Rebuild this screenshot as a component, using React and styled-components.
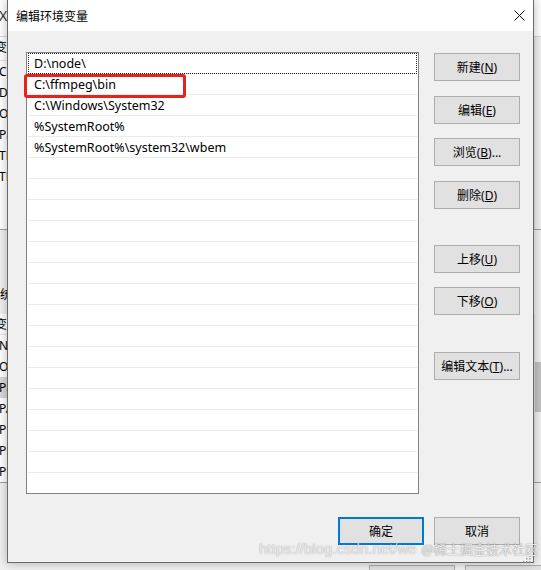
import React from "react";
import styled, { createGlobalStyle } from "styled-components";

const Global = createGlobalStyle`
  html, body { margin: 0; padding: 0; }
  body {
    width: 541px;
    height: 570px;
    overflow: hidden;
    background: #f0f0f0;
    font-family: "Noto Sans", "Noto Sans CJK SC", sans-serif;
    font-size: 12px;
    color: #000;
  }
`;

const Desktop = styled.div`
  position: relative;
  width: 541px;
  height: 570px;
  overflow: hidden;
  background: #f0f0f0;
`;

/* ---------- background window (parent dialog, mostly hidden) ---------- */
const BackWindow = styled.div`
  display: flex;
  flex-direction: column;
  width: 541px;
  height: 570px;
  background: #f0f0f0;
`;

const BackTop = styled.div`
  height: 37px;
  flex: none;
  background: #fff;
  border-bottom: 1px solid #d9d9d9;
  box-sizing: border-box;
  display: flex;
  align-items: center;
  padding-bottom: 6px;
`;

const BackGlyph = styled.span`
  margin-left: -1px;
  font-size: 14px;
  color: #333;
`;

const BackTable = styled.div`
  display: flex;
  flex: none;
  background: #fff;
  border-bottom: 1px solid #a0a0a0;
`;

const BackRows = styled.div`
  flex: 1;
  display: flex;
  flex-direction: column;
`;

const BackRow = styled.div`
  height: ${(p) => p.$h ?? 21}px;
  box-sizing: border-box;
  line-height: 21px;
  display: flex;
  background: ${(p) => (p.$selected ? "#d9d9d9" : "transparent")};
  border-bottom: ${(p) => (p.$header ? "1px solid #e5e5e5" : "none")};
  margin-right: 8px;
`;

const BackCell = styled.span`
  width: 12px;
  overflow: hidden;
  white-space: nowrap;
  text-indent: ${(p) => p.$indent}px;
  color: #000;
`;

const BackScroll = styled.div`
  width: 6px;
  flex: none;
  background: #f0f0f0;
  border-left: 1px solid #e2e2e2;
  display: flex;
  flex-direction: column;
`;

const BackThumb = styled.div`
  margin-top: ${(p) => p.$top}px;
  height: ${(p) => p.$h}px;
  background: #c2c2c2;
`;

const BackGap = styled.div`
  height: ${(p) => p.$h}px;
  flex: none;
`;

const BackLabel = styled.div`
  height: 22px;
  flex: none;
  line-height: 22px;
  width: 12px;
  overflow: hidden;
  white-space: nowrap;
  text-indent: -12px;
`;

const BackButtons = styled.div`
  display: flex;
  justify-content: flex-end;
  gap: 10px;
  margin-top: auto;
  height: 5px;
`;

const BackButton = styled.div`
  width: 86px;
  height: 26px;
  flex: none;
  margin-right: ${(p) => p.$mr ?? 0}px;
  box-sizing: border-box;
  border: 1px solid #adadad;
  background: #e1e1e1;
`;

/* ---------- the dialog ---------- */
const Dialog = styled.section`
  position: absolute;
  left: 7px;
  top: -1px;
  width: 527px;
  height: 564px;
  box-sizing: border-box;
  border: 1px solid #6a6a6a;
  background: #f0f0f0;
  box-shadow: 0 0 10px rgba(0, 0, 0, 0.28);
  display: flex;
  flex-direction: column;
`;

const TitleBar = styled.header`
  height: 31px;
  flex: none;
  background: #fff;
  display: flex;
  align-items: center;
  padding-left: 8px;
`;

const Title = styled.h1`
  margin: 0;
  flex: 1;
  font-size: 12px;
  font-weight: normal;
  color: #000;
`;

const CloseBox = styled.div`
  width: 28px;
  height: 31px;
  display: flex;
  align-items: center;
  justify-content: center;
`;

const Client = styled.div`
  flex: 1;
  display: flex;
  flex-direction: column;
  padding: 21px 13px 0 18px;
`;

const Main = styled.div`
  display: flex;
  gap: 15px;
  height: 442px;
`;

const ListBox = styled.div`
  position: relative;
  flex: 1;
  box-sizing: border-box;
  border: 1px solid #828282;
  background: #fff;
`;

const ListClip = styled.div`
  height: 100%;
  overflow: hidden;
`;

const Row = styled.div`
  height: 21px;
  box-sizing: border-box;
  margin: 0 1px;
  padding: 1px 0 0 6px;
  line-height: 19px;
  font-size: 12.5px;
  border-bottom: 1px solid #ebebeb;
  white-space: nowrap;
  outline: ${(p) => (p.$focus ? "1px dotted #222" : "none")};
  outline-offset: -1px;
`;

const Highlight = styled.div`
  position: absolute;
  left: -3px;
  top: 21px;
  width: 162px;
  height: 24px;
  box-sizing: border-box;
  border: 3px solid #e4231b;
  border-radius: 3px;
  pointer-events: none;
`;

const ButtonColumn = styled.div`
  width: 86px;
  display: flex;
  flex-direction: column;
`;

const Button = styled.button`
  width: 86px;
  height: 28px;
  flex: none;
  margin-top: ${(p) => p.$mt ?? 0}px;
  box-sizing: border-box;
  border: ${(p) => (p.$default ? "2px solid #0078d7" : "1px solid #adadad")};
  background: #e1e1e1;
  font-family: "Noto Sans", "Noto Sans CJK SC", sans-serif;
  font-size: 12px;
  color: #000;
  padding: 0;
  border-radius: 0;
  display: flex;
  align-items: center;
  justify-content: center;
  white-space: nowrap;
`;

const Footer = styled.div`
  display: flex;
  justify-content: flex-end;
  gap: 10px;
  margin-top: 23px;
`;

const Grip = styled.div`
  position: absolute;
  right: 2px;
  bottom: 2px;
  width: 10px;
  height: 10px;
`;

const Watermark = styled.div`
  position: absolute;
  left: 259px;
  top: 539px;
  display: flex;
  align-items: baseline;
  gap: 5px;
  white-space: nowrap;
  pointer-events: none;
`;

const WaterUrl = styled.span`
  font-family: "Liberation Sans", sans-serif;
  font-size: 15px;
  color: rgba(255, 255, 255, 0.75);
  text-shadow: 0 0 1px rgba(0, 0, 0, 0.3), 0 0 2px rgba(0, 0, 0, 0.12);
`;

const WaterSite = styled.span`
  font-family: "Noto Sans CJK SC", sans-serif;
  font-size: 13px;
  color: rgba(255, 255, 255, 0.85);
  text-shadow: 0 0 1px rgba(0, 0, 0, 0.45), 0 0 2px rgba(0, 0, 0, 0.2);
`;

const paths = [
  "D:\\node\\",
  "C:\\ffmpeg\\bin",
  "C:\\Windows\\System32",
  "%SystemRoot%",
  "%SystemRoot%\\system32\\wbem",
];

const sideButtons = [
  { label: "新建", key: "N", mt: 1 },
  { label: "编辑", key: "E", mt: 15 },
  { label: "浏览", key: "B", tail: "...", mt: 14 },
  { label: "删除", key: "D", mt: 15 },
  { label: "上移", key: "U", mt: 36 },
  { label: "下移", key: "O", mt: 14 },
  { label: "编辑文本", key: "T", tail: "...", mt: 37 },
];

/* only the first letters of the parent window's rows peek out beside the dialog */
const userVars = ["变", "Cl", "De", "On", "Pa", "TE", "TM", "", ""];
const sysVars = ["变", "NU", "OS", "Pa", "PA", "PR", "PR", "PR"];

function CloseIcon() {
  return (
    <svg width="11" height="11" viewBox="0 0 11 11">
      <path d="M0.5 0.5 L10.5 10.5 M10.5 0.5 L0.5 10.5" stroke="#111" strokeWidth="1" fill="none" />
    </svg>
  );
}

function GripIcon() {
  return (
    <svg width="10" height="10" viewBox="0 0 10 10">
      {[
        [8, 2],
        [8, 5],
        [5, 5],
        [8, 8],
        [5, 8],
        [2, 8],
      ].map(([x, y]) => (
        <rect key={`${x}-${y}`} x={x} y={y} width="1.5" height="1.5" fill="#a0a0a0" />
      ))}
    </svg>
  );
}

export default function App() {
  const rows = Array.from({ length: 21 }, (_, i) => paths[i] ?? "");
  return (
    <Desktop>
      <Global />
      <BackWindow>
        <BackTop>
          <BackGlyph>X</BackGlyph>
        </BackTop>
        <BackTable>
          <BackRows>
            {userVars.map((v, i) => (
              <BackRow key={i} $header={i === 0} $h={i === 0 ? 24 : 21}>
                <BackCell $indent={i === 0 ? -5 : -1}>{v}</BackCell>
              </BackRow>
            ))}
          </BackRows>
          <BackScroll>
            <BackThumb $top={0} $h={0} />
          </BackScroll>
        </BackTable>
        <BackGap $h={54} />
        <BackLabel>系统</BackLabel>
        <BackGap $h={8} />
        <BackTable>
          <BackRows>
            {sysVars.map((v, i) => (
              <BackRow key={i} $header={i === 0} $h={21} $selected={i === 3}>
                <BackCell $indent={i === 0 ? -5 : -1}>{v}</BackCell>
              </BackRow>
            ))}
          </BackRows>
          <BackScroll>
            <BackThumb $top={48} $h={50} />
          </BackScroll>
        </BackTable>
        <BackButtons>
          <BackButton />
          <BackButton $mr={-10} />
        </BackButtons>
      </BackWindow>

      <Dialog>
        <TitleBar>
          <Title>编辑环境变量</Title>
          <CloseBox>
            <CloseIcon />
          </CloseBox>
        </TitleBar>
        <Client>
          <Main>
            <ListBox>
              <ListClip>
                {rows.map((p, i) => (
                  <Row key={i} $focus={i === 0}>
                    {p}
                  </Row>
                ))}
              </ListClip>
              <Highlight />
            </ListBox>
            <ButtonColumn>
              {sideButtons.map((b) => (
                <Button key={b.label} $mt={b.mt}>
                  {b.label}(<u>{b.key}</u>){b.tail ?? ""}
                </Button>
              ))}
            </ButtonColumn>
          </Main>
          <Footer>
            <Button $default>确定</Button>
            <Button>取消</Button>
          </Footer>
        </Client>
        <Grip>
          <GripIcon />
        </Grip>
      </Dialog>

      <Watermark>
        <WaterUrl>https://blog.csdn.net/we</WaterUrl>
        <WaterSite>@稀土掘金技术社区</WaterSite>
      </Watermark>
    </Desktop>
  );
}
